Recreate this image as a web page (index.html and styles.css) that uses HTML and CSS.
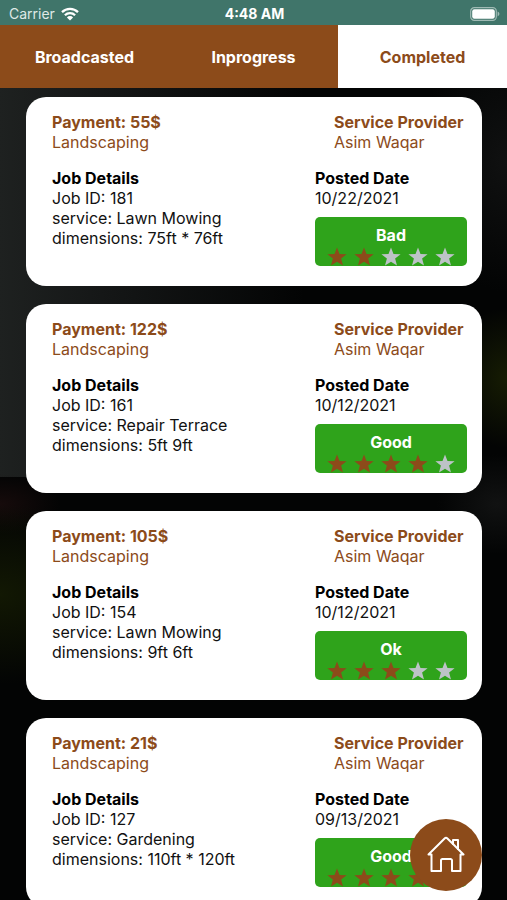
FILE: index.html
```html
<!DOCTYPE html>
<html lang="en">
<head>
    <meta charset="UTF-8">
    <meta name="viewport" content="width=device-width, initial-scale=1.0">
    <title>Completed Jobs</title>
    <link rel="stylesheet" href="styles.css">
</head>
<body>

    <!-- Star shape shared by all ratings -->
    <svg class="sprite" aria-hidden="true">
        <symbol id="star" viewBox="0 0 20 20">
            <path d="M10 0.4l2.5 6.5 7.1 0.3-5.5 4.4 1.9 7-6-3.9-6 3.9 1.9-7-5.5-4.4 7.1-0.3z"/>
        </symbol>
    </svg>

    <div class="status-bar">
        <div class="carrier">
            <span>Carrier</span>
            <svg class="wifi" viewBox="0 0 18 14" aria-hidden="true">
                <path d="M1 5.2a11.5 11.5 0 0 1 16 0M3.9 8.2a7.3 7.3 0 0 1 10.2 0" fill="none" stroke="#fff" stroke-width="2.3"/>
                <path d="M9 13.6L5.9 10.4a4.4 4.4 0 0 1 6.2 0z" fill="#fff"/>
            </svg>
        </div>
        <span class="time">4:48 AM</span>
        <svg class="battery" viewBox="0 0 30 14" aria-hidden="true">
            <rect x="0.7" y="0.7" width="25.6" height="12.6" rx="3.6" fill="none" stroke="#9fbab4" stroke-width="1.2"/>
            <rect x="2.2" y="2.2" width="22.6" height="9.6" rx="2.2" fill="#fff"/>
            <path d="M27.6 4.6c2.4 1 2.4 3.8 0 4.8z" fill="#9fbab4"/>
        </svg>
    </div>

    <nav class="tabs">
        <button class="tab" type="button">Broadcasted</button>
        <button class="tab" type="button">Inprogress</button>
        <button class="tab active" type="button">Completed</button>
    </nav>

    <main class="jobs">
        <article class="card">
            <div class="row">
                <div class="accent">
                    <h2>Payment: 55$</h2>
                    <p>Landscaping</p>
                </div>
                <div class="accent provider">
                    <h2>Service Provider</h2>
                    <p>Asim Waqar</p>
                </div>
            </div>
            <div class="row">
                <div>
                    <h3>Job Details</h3>
                    <p>Job ID: 181</p>
                    <p>service: Lawn Mowing</p>
                    <p>dimensions: 75ft * 76ft</p>
                </div>
                <div class="posted">
                    <h3>Posted Date</h3>
                    <p>10/22/2021</p>
                    <div class="rating">
                        <span>Bad</span>
                        <div class="stars">
                            <svg class="on"><use href="#star"/></svg>
                            <svg class="on"><use href="#star"/></svg>
                            <svg><use href="#star"/></svg>
                            <svg><use href="#star"/></svg>
                            <svg><use href="#star"/></svg>
                        </div>
                    </div>
                </div>
            </div>
        </article>

        <article class="card">
            <div class="row">
                <div class="accent">
                    <h2>Payment: 122$</h2>
                    <p>Landscaping</p>
                </div>
                <div class="accent provider">
                    <h2>Service Provider</h2>
                    <p>Asim Waqar</p>
                </div>
            </div>
            <div class="row">
                <div>
                    <h3>Job Details</h3>
                    <p>Job ID: 161</p>
                    <p>service: Repair Terrace</p>
                    <p>dimensions: 5ft 9ft</p>
                </div>
                <div class="posted">
                    <h3>Posted Date</h3>
                    <p>10/12/2021</p>
                    <div class="rating">
                        <span>Good</span>
                        <div class="stars">
                            <svg class="on"><use href="#star"/></svg>
                            <svg class="on"><use href="#star"/></svg>
                            <svg class="on"><use href="#star"/></svg>
                            <svg class="on"><use href="#star"/></svg>
                            <svg><use href="#star"/></svg>
                        </div>
                    </div>
                </div>
            </div>
        </article>

        <article class="card">
            <div class="row">
                <div class="accent">
                    <h2>Payment: 105$</h2>
                    <p>Landscaping</p>
                </div>
                <div class="accent provider">
                    <h2>Service Provider</h2>
                    <p>Asim Waqar</p>
                </div>
            </div>
            <div class="row">
                <div>
                    <h3>Job Details</h3>
                    <p>Job ID: 154</p>
                    <p>service: Lawn Mowing</p>
                    <p>dimensions: 9ft 6ft</p>
                </div>
                <div class="posted">
                    <h3>Posted Date</h3>
                    <p>10/12/2021</p>
                    <div class="rating">
                        <span>Ok</span>
                        <div class="stars">
                            <svg class="on"><use href="#star"/></svg>
                            <svg class="on"><use href="#star"/></svg>
                            <svg class="on"><use href="#star"/></svg>
                            <svg><use href="#star"/></svg>
                            <svg><use href="#star"/></svg>
                        </div>
                    </div>
                </div>
            </div>
        </article>

        <article class="card">
            <div class="row">
                <div class="accent">
                    <h2>Payment: 21$</h2>
                    <p>Landscaping</p>
                </div>
                <div class="accent provider">
                    <h2>Service Provider</h2>
                    <p>Asim Waqar</p>
                </div>
            </div>
            <div class="row">
                <div>
                    <h3>Job Details</h3>
                    <p>Job ID: 127</p>
                    <p>service: Gardening</p>
                    <p>dimensions: 110ft * 120ft</p>
                </div>
                <div class="posted">
                    <h3>Posted Date</h3>
                    <p>09/13/2021</p>
                    <div class="rating">
                        <span>Good</span>
                        <div class="stars">
                            <svg class="on"><use href="#star"/></svg>
                            <svg class="on"><use href="#star"/></svg>
                            <svg class="on"><use href="#star"/></svg>
                            <svg class="on"><use href="#star"/></svg>
                            <svg><use href="#star"/></svg>
                        </div>
                    </div>
                </div>
            </div>
        </article>
    </main>

    <button class="home" type="button" aria-label="Home">
        <svg viewBox="0 0 38 38" aria-hidden="true">
            <path d="M1.5 18.5L17.6 2.5a2 2 0 0 1 2.8 0L26 8V4h5v9l5.5 5.500H33.500V35H25V24.500a1.500 1.500 0 0 0-1.500-1.500h-8a1.500 1.500 0 0 0-1.500 1.500V35H4.500V18.500z"/>
            <path d="M26 8l5 5"/>
        </svg>
    </button>

</body>
</html>
```

FILE: styles.css
```css
* {
    box-sizing: border-box;
}

/* Base Styling */
body {
    font-family: 'Inter', sans-serif;
    font-size: 16px;
    line-height: 20px;
    color: #111;
    margin: 0;
    height: 100vh;
    display: flex;
    flex-direction: column;
    background-color: #030404;
    background-image:
        radial-gradient(ellipse 130px 90px at 0 66%, #121803, transparent),
        radial-gradient(ellipse 60px 30px at 0 56%, #160b0b, transparent),
        radial-gradient(ellipse 60px 70px at 100% 42%, #161c03, transparent),
        radial-gradient(ellipse 60px 50px at 98% 56%, #111212, transparent),
        radial-gradient(ellipse 90px 130px at 100% 18%, #101111, transparent),
        linear-gradient(to right, #1e2120, #151717 20%, transparent 60%);
    background-size: 100% 100%, 100% 100%, 100% 100%, 100% 100%, 100% 100%, 100% 53%;
    background-repeat: no-repeat;
}

h2, h3, p {
    font-size: 16px;
    margin: 0;
}

h2, h3 {
    font-weight: 700;
}

h3 {
    color: #000;
}

.sprite {
    display: none;
}

/* Status Bar */
.status-bar {
    flex: none;
    display: grid;
    grid-template-columns: 1fr auto 1fr;
    align-items: center;
    height: 25px;
    padding: 2px 7px 0 9px;
    background-color: #40756a;
    color: #fff;
    font-size: 14px;
}

.carrier {
    display: flex;
    align-items: center;
    gap: 6px;
    color: #dfe9e6;
}

.wifi {
    width: 18px;
    height: 14px;
}

.time {
    font-weight: 700;
}

.battery {
    width: 30px;
    height: 14px;
    justify-self: end;
}

/* Tabs */
.tabs {
    flex: none;
    display: flex;
    height: 63px;
    background-color: #8c4b1a;
}

.tab {
    flex: 1;
    padding: 0;
    border: none;
    background-color: #8c4b1a;
    color: #fff;
    font-family: inherit;
    font-size: 16px;
    font-weight: 700;
    cursor: pointer;
}

.tab.active {
    background-color: #fff;
    color: #8c4b1a;
}

/* Job Cards */
.jobs {
    flex: 1;
    display: flex;
    flex-direction: column;
    gap: 18px;
    padding: 9px 25px 18px 26px;
    overflow-y: auto;
    scrollbar-width: none;
}

.card {
    flex: none;
    display: flex;
    flex-direction: column;
    gap: 16px;
    padding: 15px 15px 20px 26px;
    background-color: #fff;
    border-radius: 20px;
}

.row {
    display: flex;
    justify-content: space-between;
}

.accent {
    color: #8c4b1a;
}

.provider {
    min-width: 133px;
}

.posted {
    width: 152px;
}

/* Rating */
.rating {
    height: 49px;
    margin-top: 9px;
    padding-top: 8px;
    border-radius: 5px;
    background-color: #2fa31b;
    color: #fff;
    font-weight: 700;
    text-align: center;
    overflow: hidden;
}

.stars {
    display: flex;
    justify-content: center;
    gap: 7px;
    margin-top: 2px;
}

.stars svg {
    width: 20px;
    height: 20px;
    fill: #bdc3c7;
}

.stars .on {
    fill: #8c4b1a;
}

/* Floating Home Button */
.home {
    position: fixed;
    right: 25px;
    bottom: 9px;
    display: flex;
    justify-content: center;
    align-items: center;
    width: 72px;
    height: 72px;
    padding: 0;
    border: none;
    border-radius: 50%;
    background-color: #8c4b1a;
    cursor: pointer;
}

.home svg {
    width: 38px;
    height: 38px;
    fill: none;
    stroke: #fff;
    stroke-width: 2;
    stroke-linecap: round;
    stroke-linejoin: round;
}
```
